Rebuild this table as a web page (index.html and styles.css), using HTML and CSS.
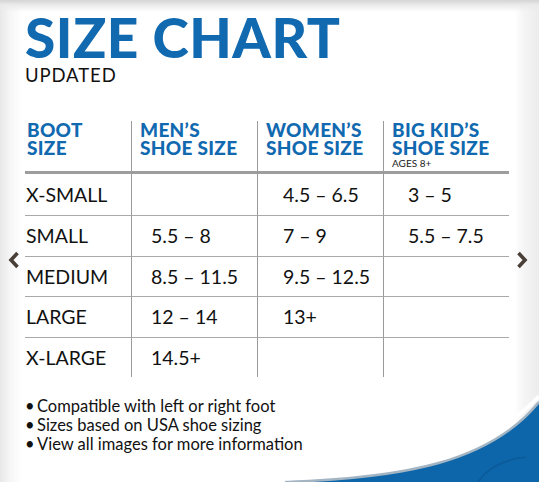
FILE: index.html
```html
<!DOCTYPE html>
<html lang="en">
<head>
<meta charset="utf-8">
<title>Size Chart</title>
<link rel="stylesheet" href="styles.css">
</head>
<body>
<div class="page">
  <div class="content">
    <h1 class="title">SIZE CHART</h1>
    <div class="subtitle">UPDATED</div>

    <div class="chart">
      <div class="hcell first"><span class="hl">BOOT</span><span class="hl">SIZE</span></div>
      <div class="hcell"><span class="hl">MEN’S</span><span class="hl">SHOE SIZE</span></div>
      <div class="hcell"><span class="hl">WOMEN’S</span><span class="hl">SHOE SIZE</span></div>
      <div class="hcell"><span class="hl">BIG KID’S</span><span class="hl">SHOE SIZE</span><span class="ages">AGES 8+</span></div>

      <div class="cell first top">X-SMALL</div>
      <div class="cell top men"></div>
      <div class="cell top women">4.5 – 6.5</div>
      <div class="cell top kids">3 – 5</div>

      <div class="cell first">SMALL</div>
      <div class="cell men">5.5 – 8</div>
      <div class="cell women">7 – 9</div>
      <div class="cell kids">5.5 – 7.5</div>

      <div class="cell first">MEDIUM</div>
      <div class="cell men">8.5 – 11.5</div>
      <div class="cell women">9.5 – 12.5</div>
      <div class="cell kids"></div>

      <div class="cell first">LARGE</div>
      <div class="cell men">12 – 14</div>
      <div class="cell women">13+</div>
      <div class="cell kids"></div>

      <div class="cell first">X-LARGE</div>
      <div class="cell men">14.5+</div>
      <div class="cell women"></div>
      <div class="cell kids"></div>
    </div>

    <ul class="notes">
      <li>Compatible with left or right foot</li>
      <li>Sizes based on USA shoe sizing</li>
      <li>View all images for more information</li>
    </ul>
  </div>

  <svg class="swoosh" width="539" height="482" viewBox="0 0 539 482" aria-hidden="true">
    <path d="M285 482 C 405 478, 490 462, 539 402 L 539 482 Z" fill="#0e66aa"/>
    <path d="M285 482 C 405 478, 490 462, 539 402" fill="none" stroke="#a3b4c3" stroke-width="2.5"/>
    <path d="M255 480 C 395 475, 482 457, 539 396" fill="none" stroke="#ffffff" stroke-width="4" opacity="0.9"/>
    <path d="M478 482 C 486 470, 502 460, 526 457" fill="none" stroke="#0a5a98" stroke-width="1.5"/>
  </svg>

  <button class="nav prev" aria-label="Previous">
    <svg width="14" height="18" viewBox="0 0 14 18"><polyline points="10.5,2 4,9 10.5,16" fill="none" stroke="#4a3f36" stroke-width="3.6" stroke-linejoin="miter"/></svg>
  </button>
  <button class="nav next" aria-label="Next">
    <svg width="14" height="18" viewBox="0 0 14 18"><polyline points="3.5,2 10,9 3.5,16" fill="none" stroke="#4a3f36" stroke-width="3.6" stroke-linejoin="miter"/></svg>
  </button>
</div>
</body>
</html>
```

FILE: styles.css
```css
* { box-sizing: border-box; }
html, body { margin: 0; padding: 0; }
body { background: #fff; font-family: "Lato", "Liberation Sans", sans-serif; color: #111; }

.page {
  position: relative;
  width: 539px;
  height: 482px;
  overflow: hidden;
  background:
    linear-gradient(to bottom, #d4d4d4 0, #ebebeb 5px, rgba(255,255,255,0) 12px),
    linear-gradient(to right, #e8e8e8 0, #f6f6f6 10px, rgba(255,255,255,0) 22px),
    linear-gradient(to left, #ececec 0, #f4f4f4 14px, #fafafa 20px, rgba(255,255,255,0) 24px),
    #ffffff;
}

.content {
  padding: 10px 0 0 25px;
  position: relative;
  z-index: 1;
}

.title {
  margin: 0;
  font-family: "Lato", sans-serif;
  font-weight: 900;
  font-size: 55px;
  line-height: 55px;
  color: #1169b0;
  letter-spacing: 0.5px;
}

.subtitle {
  margin-top: 1px;
  font-size: 18.5px;
  line-height: 18px;
  font-weight: 400;
  color: #111;
  letter-spacing: 0.9px;
}

.chart {
  margin-top: 37px;
  display: grid;
  grid-template-columns: 106px 126px 126px 126px;
  grid-template-rows: 53px 41px 41px 40px 41px 40px;
  width: 484px;
}

.hcell {
  font-weight: 900;
  font-size: 19px;
  line-height: 18px;
  color: #1169b0;
  letter-spacing: 0.3px;
  padding-left: 8px;
  border-left: 1px solid #9a9a9a;
  border-bottom: 3px solid #9d9d9d;
  display: flex;
  flex-direction: column;
}
.hcell.first { padding-left: 2px; border-left: none; }
.hl { display: block; height: 18px; white-space: nowrap; }
.ages {
  font-weight: 400;
  font-size: 10px;
  line-height: 12px;
  letter-spacing: 0;
  color: #222;
  margin-top: 0;
}

.cell {
  display: flex;
  align-items: center;
  font-size: 19.5px;
  color: #111;
  border-left: 1px solid #9a9a9a;
  border-top: 1px solid #a9a9a9;
  padding-bottom: 1px;
}
.cell.top { border-top: none; }
.cell.first { border-left: none; padding-left: 1px; }
.cell.men { padding-left: 19px; }
.cell.women { padding-left: 25px; }
.cell.kids { padding-left: 24px; }

.notes {
  list-style: none;
  margin: 20px 0 0 0;
  padding: 0;
  font-size: 16.5px;
  line-height: 19px;
  color: #111;
}
.notes li { position: relative; padding-left: 12px; }
.notes li::before {
  content: "•";
  position: absolute;
  left: 0;
  top: 0;
}

.swoosh {
  position: absolute;
  left: 0;
  top: 0;
  z-index: 0;
}

.nav {
  position: absolute;
  top: 251px;
  width: 14px;
  height: 18px;
  padding: 0;
  border: 0;
  background: none;
  z-index: 2;
}
.nav svg { display: block; }
.prev { left: 7px; }
.next { left: 515px; }
```
